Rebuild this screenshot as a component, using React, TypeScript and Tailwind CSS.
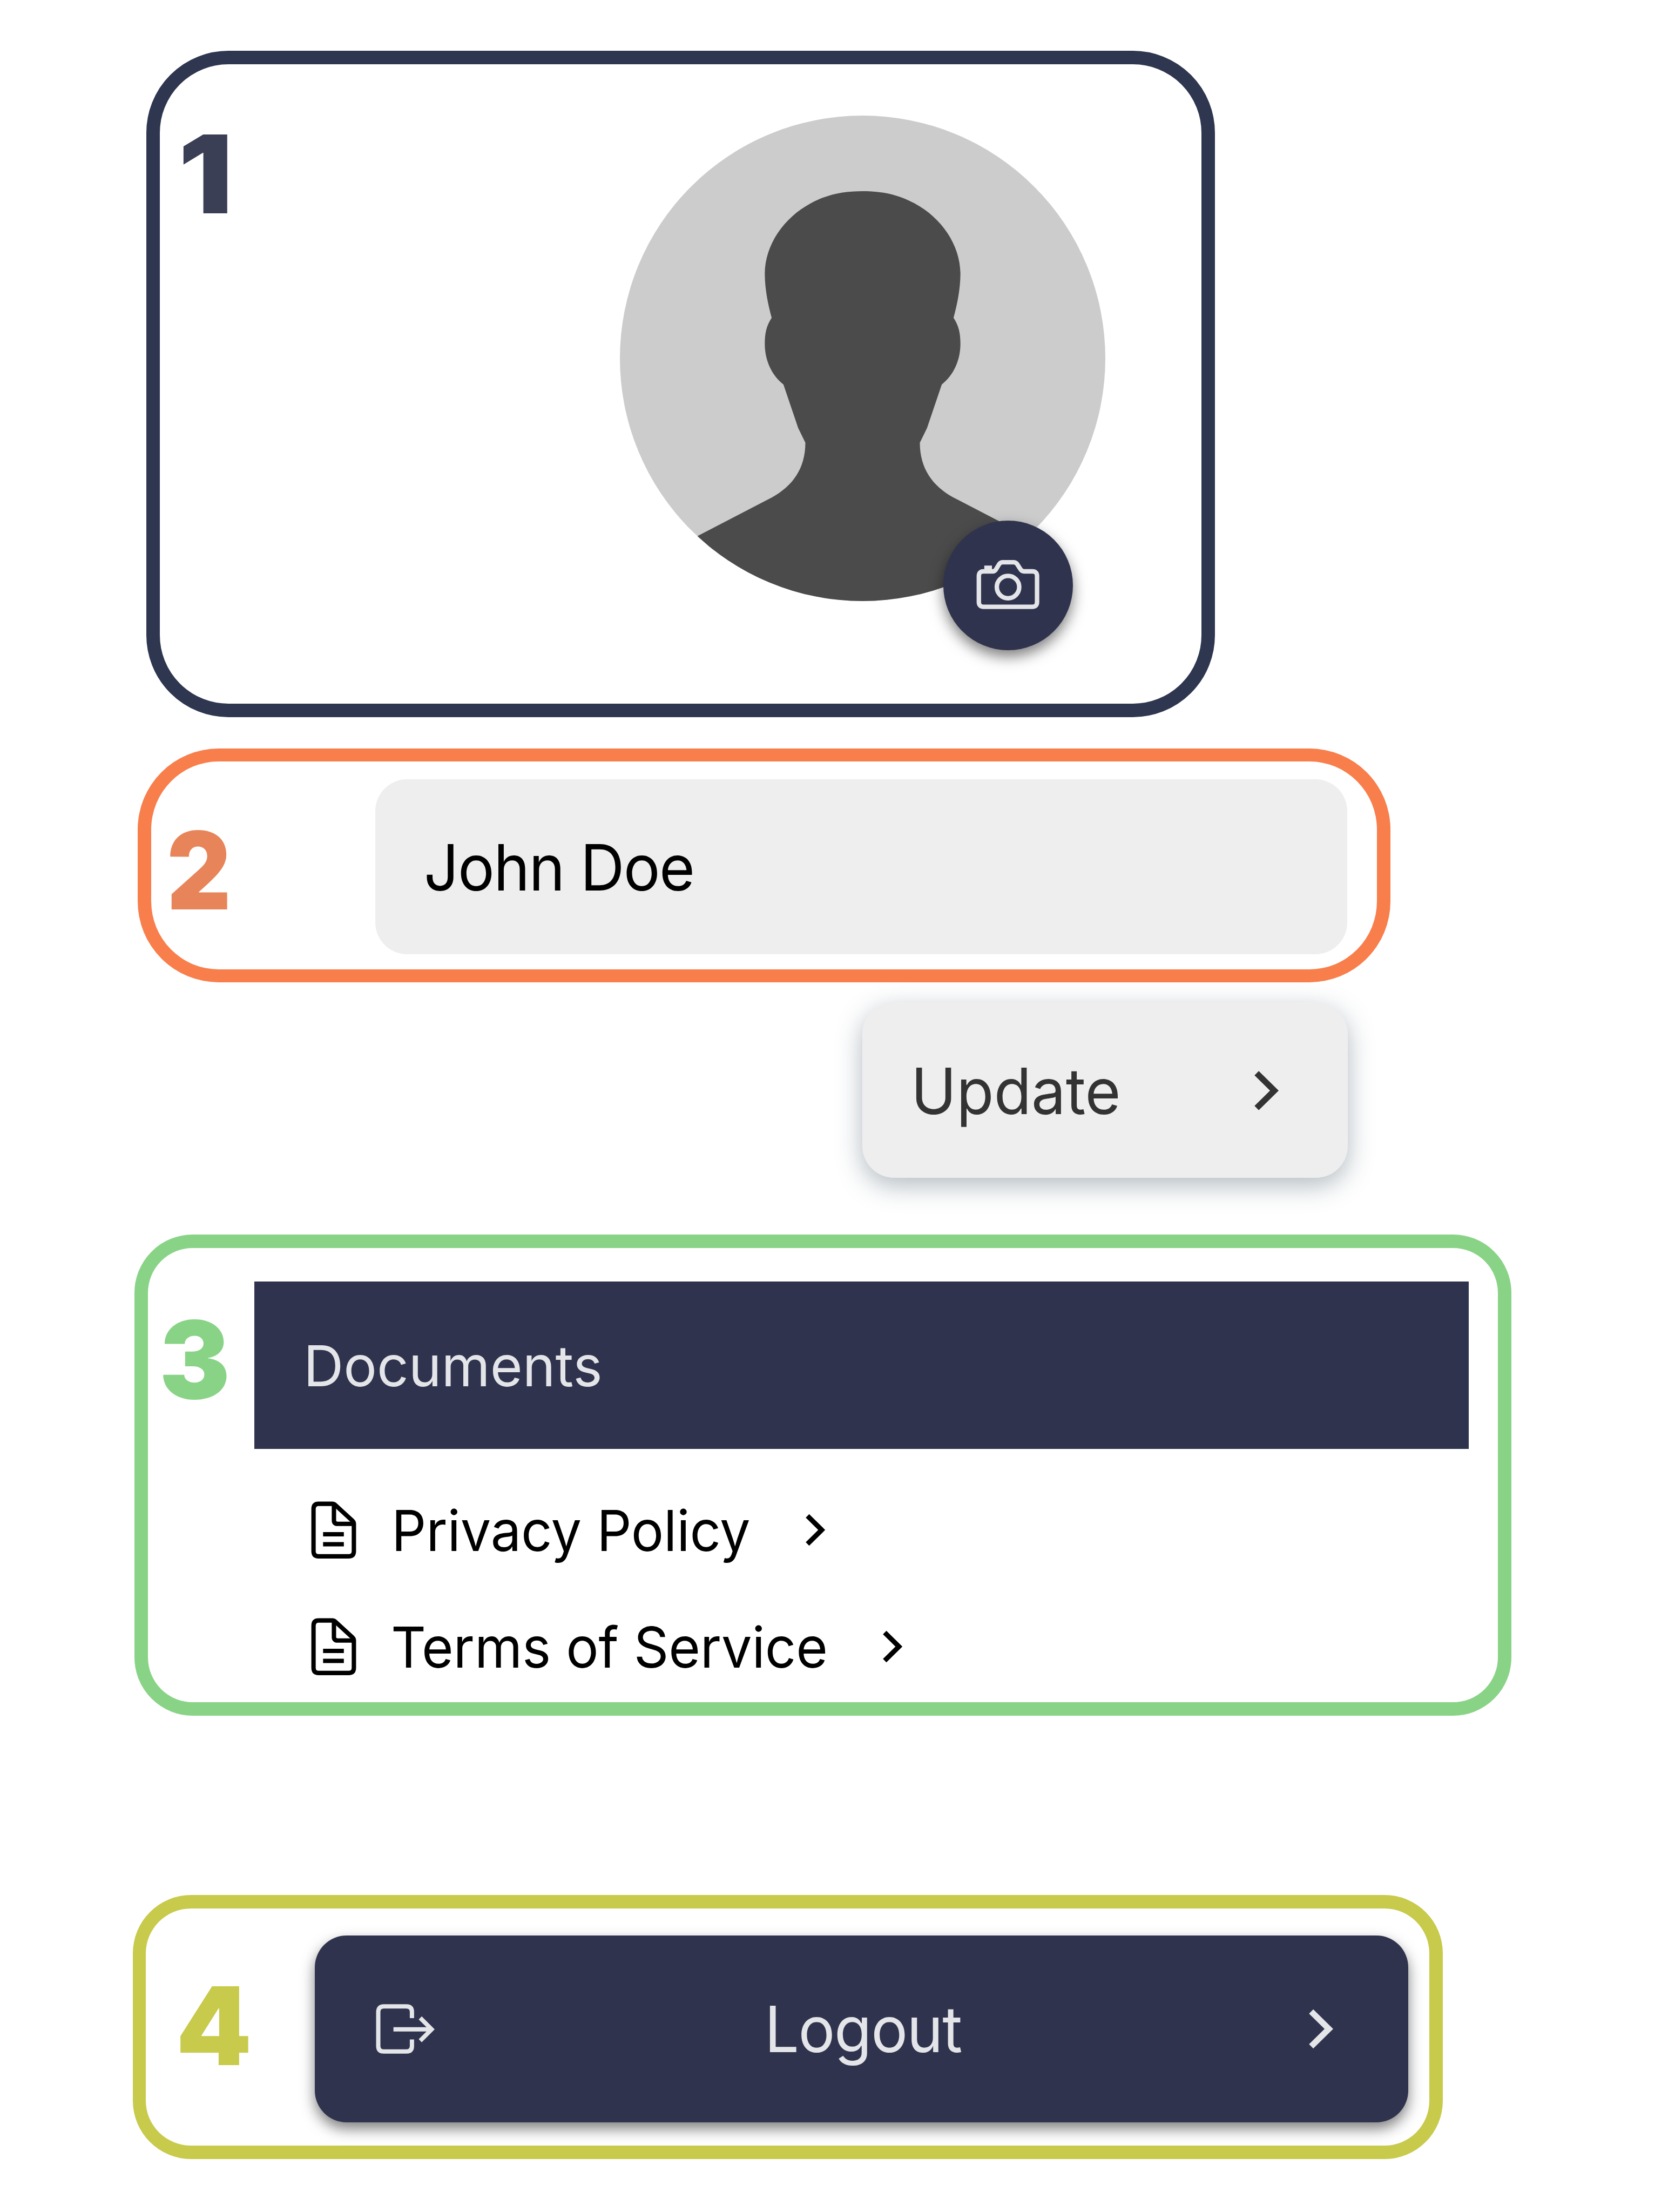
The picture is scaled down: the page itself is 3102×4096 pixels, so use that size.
function Chevron({ className }: { className: string }) {
  return (
    <svg viewBox="0 0 46 73" fill="none" stroke="currentColor" strokeWidth="11.2" className={className}>
      <path d="M4.2 4.2 37 36.5 4.2 68.8" />
    </svg>
  );
}

function CameraIcon() {
  return (
    <svg viewBox="0 0 1098 1098" fill="none" stroke="currentColor" strokeWidth="38" className="size-full">
      <path d="M341 430H418Q436 430 446 413L470 374Q482 353 500 353H597Q617 353 629 374L654 413Q665 430 684 430H754Q794 430 794 470V690Q794 730 754 730H341Q301 730 301 690V470Q301 430 341 430Z" />
      <path d="M347 381H412V420H347Z" fill="currentColor" stroke="none" />
      <circle cx="548" cy="563" r="95" />
    </svg>
  );
}

function DocumentIcon() {
  return (
    <svg viewBox="0 0 384 485" fill="none" stroke="currentColor" strokeWidth="37" className="h-[106px] w-[84px] shrink-0">
      <path d="M64 21H180Q194 21 205 31L352 166Q363 177 363 190V422Q363 466 319 466H64Q21 466 21 422V65Q21 21 64 21Z" />
      <path d="M194 22V160Q194 191 225 191H362" />
      <path d="M102 279H278M102 364H278" />
    </svg>
  );
}

function LogoutIcon() {
  return (
    <svg viewBox="0 0 166 141" fill="none" stroke="currentColor" strokeWidth="12.2" className="h-[92px] w-[109px] shrink-0">
      <path d="M102 40V22Q102 6.5 86 6.5H22Q6.4 6.5 6.4 22V119Q6.4 134.5 22 134.5H86Q102 134.5 102 119V100.5" />
      <path d="M49.5 71.6H158M125.5 39.2 158 71.6 125.5 104" />
    </svg>
  );
}

function Avatar() {
  return (
    <svg viewBox="0 0 1484 1484" className="size-full rounded-full bg-[#cccccc]">
      <path
        fill="#4b4b4b"
        d="M742 231C682 231 634 241 584 268C500 313 444 396 443 482C443 530 453 578 464 618C448 642 443 665 443 698C443 748 464 794 500 822L545 955L567 1000C567 1080 527 1133 465 1167L240 1284L150 1335V1600H1334V1335L1244 1284L1019 1167C957 1133 917 1080 917 1000L939 955L984 822C1020 794 1041 748 1041 698C1041 665 1036 642 1020 618C1031 578 1041 530 1041 482C1040 396 984 313 900 268C850 241 802 231 742 231Z"
      />
    </svg>
  );
}

const documents = [
  { label: "Privacy Policy", className: "ml-[65.5px] w-[767px] tracking-[-0.2px]" },
  { label: "Terms of Service", className: "ml-[64px] w-[911px] tracking-[-0.2px]" },
];

export default function App() {
  return (
    <main className="flex h-[4096px] w-[3102px] flex-col items-start overflow-hidden bg-white pt-[94px] font-['Inter',sans-serif] font-normal text-black">
      <section className="ml-[271px] flex h-[1234px] w-[1979px] shrink-0 items-start rounded-[152px] border-[25px] border-[#2e3650]">
        <span className="mt-[103px] ml-[34px] w-[200px] origin-left scale-x-112 text-[200px] leading-none font-black text-[#3b3f55]">1</span>
        <div className="relative mt-[94.5px] ml-[617.5px] size-[899px] shrink-0">
          <Avatar />
          <button className="absolute top-[750px] left-[599px] size-[240px] rounded-full bg-[#2f334d] text-[#e4e5e9] shadow-[0_12px_26px_rgba(0,0,0,0.5)]">
            <CameraIcon />
          </button>
        </div>
      </section>

      <section className="mt-[58px] ml-[255px] flex h-[433px] w-[2320px] shrink-0 items-start rounded-[150px] border-x-[25px] border-y-[24px] border-[#f87e4b]">
        <span className="mt-[101px] ml-[29px] w-[200px] origin-left scale-x-92 text-[200px] leading-none font-black text-[#e88459]">2</span>
        <div className="mt-[33px] ml-[186px] flex h-[324px] w-[1799.5px] items-center rounded-[59px] bg-[#eeeeee] pt-[1px] pl-[90px]">
          <span className="origin-left scale-x-96 text-[118px] leading-none tracking-[-1.8px]">John Doe</span>
        </div>
      </section>

      <button className="mt-[36.5px] ml-[1597px] flex h-[325px] w-[899px] shrink-0 items-center justify-between rounded-[59px] bg-[#eeeeee] pt-[3px] pr-[127px] pl-[89.5px] text-[#333333] shadow-[0_14px_48px_rgba(40,65,80,0.36)]">
        <span className="origin-left scale-x-96 text-[118px] leading-none">Update</span>
        <Chevron className="h-[73px] w-[46px]" />
      </button>

      <section className="mt-[105.5px] ml-[249px] flex h-[891px] w-[2550px] shrink-0 items-start rounded-[108px] border-[25px] border-[#89d387]">
        <span className="mt-[106px] ml-[21px] w-[150px] origin-left scale-x-98 text-[200px] leading-none font-black text-[#89d387]">3</span>
        <div className="mt-[62px] ml-[26px] flex w-[2249px] flex-col">
          <h2 className="flex h-[310px] items-center bg-[#2f334d] pt-[1px] pl-[91px] text-[105px] leading-none text-[#e4e5e9]">
            <span className="origin-left scale-x-98">Documents</span>
          </h2>
          <ul className="mt-[97px] ml-[104.5px] flex flex-col gap-[110px]">
            {documents.map((doc) => (
              <li key={doc.label} className="flex h-[106px] items-center">
                <DocumentIcon />
                <div className={doc.className}>
                  <span className="inline-block origin-left scale-x-96 text-[105px] leading-none whitespace-nowrap">{doc.label}</span>
                </div>
                <Chevron className="h-[60px] w-[37px]" />
              </li>
            ))}
          </ul>
        </div>
      </section>

      <section className="mt-[332px] ml-[246px] flex h-[489px] w-[2426px] shrink-0 items-start rounded-[108px] border-[25px] border-l-[24px] border-[#c7ca4b]">
        <span className="mt-[117px] ml-[56px] w-[160px] text-[200px] leading-none font-black text-[#c7ca4b]">4</span>
        <button className="mt-[50px] ml-[97px] flex h-[346px] w-[2024.5px] items-center rounded-[59px] bg-[#2f334d] pr-[138px] pl-[112.5px] text-[#e4e5e9] shadow-[0_12px_26px_rgba(0,0,0,0.5)]">
          <LogoutIcon />
          <span className="ml-[611px] origin-left scale-x-96 text-[118px] leading-none tracking-[-1.5px]">Logout</span>
          <Chevron className="ml-auto h-[76px] w-[46px]" />
        </button>
      </section>
    </main>
  );
}
